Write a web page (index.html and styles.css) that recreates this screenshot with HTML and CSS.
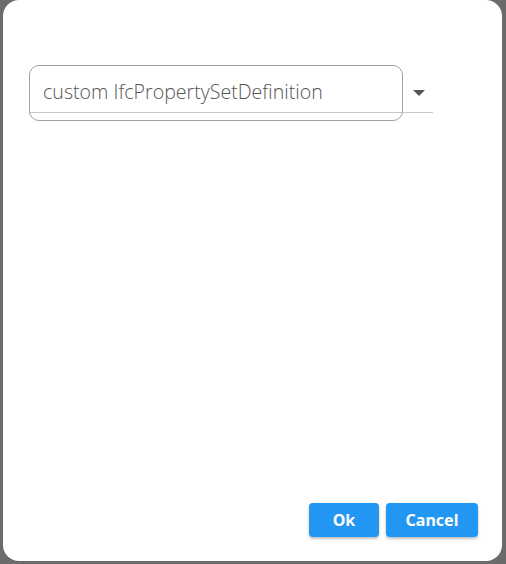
FILE: index.html
```html
<!DOCTYPE html>
<html>
<head>
<meta charset="utf-8">
<link rel="stylesheet" href="styles.css">
</head>
<body>
<div class="dialog">
  <div class="content">
    <div class="select">
      <div class="field">
        <span class="value">custom IfcPropertySetDefinition</span>
      </div>
      <div class="arrow"><svg width="12" height="6" viewBox="0 0 12 6"><path d="M0 0h12L6 6z" fill="#555"/></svg></div>
    </div>
  </div>
  <div class="actions">
    <button class="btn ok">Ok</button>
    <button class="btn cancel">Cancel</button>
  </div>
</div>
</body>
</html>
```
FILE: styles.css
```css
html, body { margin: 0; padding: 0; }
body {
  background: #6b6b6b;
  width: 506px;
  height: 564px;
  overflow: hidden;
  font-family: "Noto Sans", "Open Sans", sans-serif;
}
.dialog {
  margin-left: 3px;
  width: 499px;
  height: 561px;
  background: #fff;
  border-radius: 16px;
  display: flex;
  flex-direction: column;
  box-sizing: border-box;
  padding: 65px 24px 24px 26px;
}
.content { flex: 1; }
.select {
  display: flex;
  align-items: flex-start;
  width: 404px;
  border-bottom: 1px solid #c8c8c8;
  height: 47px;
  position: relative;
}
.field {
  width: 374px;
  height: 56px;
  box-sizing: border-box;
  border: 1px solid #a0a0a0;
  border-radius: 10px;
  padding-left: 13px;
  display: flex;
  align-items: center;
  background: transparent;
  margin-bottom: -9px;
}
.value {
  font-family: "Open Sans", "Noto Sans", sans-serif;
  font-weight: 300;
  font-size: 19.6px;
  color: #555;
  padding-bottom: 3px;
}
.arrow {
  margin-left: 10px;
  margin-top: 25px;
  line-height: 0;
}
.actions {
  display: flex;
  justify-content: flex-end;
  gap: 7px;
}
.btn {
  background: #2196f3;
  color: #fff;
  border: none;
  border-radius: 4px;
  height: 34px;
  font-family: "Noto Sans", "Open Sans", sans-serif;
  font-weight: 700;
  font-size: 16px;
  box-shadow: 0 2px 3px rgba(0,0,0,0.25);
  padding: 0;
}
.ok { width: 70px; }
.cancel { width: 92px; }
```
